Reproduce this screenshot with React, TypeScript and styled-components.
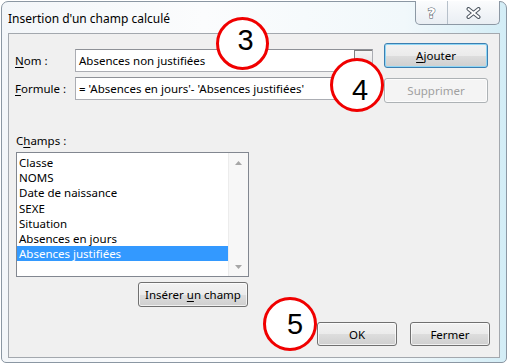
import styled, { createGlobalStyle } from 'styled-components';

const GlobalStyle = createGlobalStyle`
  html, body {
    margin: 0;
    padding: 0;
    background: #ffffff;
  }
  body {
    width: 508px;
    height: 364px;
    overflow: hidden;
    font-family: "Noto Sans", "Liberation Sans", sans-serif;
    font-size: 11.5px;
    color: #000;
  }
`;

const Window = styled.div`
  position: relative;
  box-sizing: border-box;
  width: 506px;
  height: 362px;
  margin: 1px;
  border: 1px solid #8b97a3;
  border-radius: 7px 7px 5px 5px;
  background: linear-gradient(to right, #f3f6f9 0%, #fbfcfd 40%, #f1f8fb 80%, #d3edf6 100%);
  display: flex;
  flex-direction: column;
  padding: 0 6px 4px 6px;
`;

const TitleBar = styled.div`
  height: 31px;
  display: flex;
  align-items: flex-start;
`;

const Title = styled.div`
  padding: 9px 0 0 0;
  line-height: 16px;
  font-size: 12px;
  color: #000;
`;

const CaptionGroup = styled.div`
  margin-left: auto;
  margin-top: -1px;
  height: 23px;
  display: flex;
  border: 1px solid #8c98a4;
  border-top: none;
  border-radius: 0 0 5px 5px;
  background: linear-gradient(#fbfcfd, #e9eef3);
  overflow: hidden;
`;

const CaptionButton = styled.div<{ $w: number }>`
  width: ${(p) => p.$w}px;
  display: flex;
  align-items: center;
  justify-content: center;
  & + & {
    border-left: 1px solid #b6c0ca;
  }
`;

const HelpGlyph = styled.span`
  font-family: "DejaVu Sans", sans-serif;
  font-weight: 700;
  font-size: 14px;
  line-height: 14px;
  color: #ffffff;
  -webkit-text-stroke: 1px #4d5660;
  paint-order: stroke fill;
`;

const Client = styled.div`
  flex: 1;
  display: flex;
  flex-direction: column;
  border: 1px solid #a3a8ae;
  background: #f0f0f0;
`;

const TopSection = styled.div`
  display: flex;
  padding: 9px 11px 0 6px;
  gap: 11px;
`;

const Fields = styled.div`
  display: flex;
  flex-direction: column;
  gap: 5px;
  padding-top: 6px;
`;

const FieldRow = styled.div`
  display: flex;
  align-items: center;
  height: 23px;
`;

const Label = styled.span`
  width: 60px;
`;

const Mn = styled.span`
  text-decoration: underline;
  text-underline-offset: 2px;
`;

const TextBox = styled.div`
  box-sizing: border-box;
  width: 298px;
  height: 23px;
  display: flex;
  align-items: center;
  border: 1px solid #abadb3;
  border-top-color: #8e9197;
  background: #fff;
`;

const TextValue = styled.span`
  flex: 1;
  padding-left: 3px;
  white-space: nowrap;
  overflow: hidden;
`;

const DropButton = styled.div`
  box-sizing: border-box;
  width: 18px;
  height: 100%;
  display: flex;
  align-items: flex-end;
  justify-content: center;
  padding-bottom: 6px;
  border: 1px solid #7f7f7f;
  border-right: none;
  background: linear-gradient(#f6f6f6, #e0e0e0);
`;

const SideButtons = styled.div`
  display: flex;
  flex-direction: column;
  gap: 10px;
`;

const Button = styled.button<{ $w: number; $h?: number; $default?: boolean }>`
  box-sizing: border-box;
  width: ${(p) => p.$w}px;
  height: ${(p) => p.$h ?? 25}px;
  padding: 0;
  font-family: "Noto Sans", "Liberation Sans", sans-serif;
  font-size: 11.5px;
  color: #000;
  border: 1px solid ${(p) => (p.$default ? '#3c7fb1' : '#707070')};
  border-radius: 3px;
  background: linear-gradient(#f2f2f2 0%, #ebebeb 50%, #dddddd 51%, #cfcfcf 100%);
  box-shadow: inset 0 0 0 1px ${(p) => (p.$default ? '#8fd6f5' : 'rgba(255,255,255,0.7)')};

  &:disabled {
    color: #a0a0a0;
    border-color: #adb2b5;
    background: #f4f4f4;
    box-shadow: inset 0 0 0 1px #fcfcfc;
  }
`;

const ChampsSection = styled.div`
  display: flex;
  flex-direction: column;
  width: 233px;
  margin: 30px 0 0 7px;
`;

const ChampsLabel = styled.div`
  line-height: 15px;
  margin-bottom: 4px;
`;

const ListBox = styled.div`
  box-sizing: border-box;
  height: 125px;
  display: flex;
  border: 1px solid #828790;
  background: #fff;
`;

const Items = styled.div`
  flex: 1;
  padding-top: 2px;
`;

const Item = styled.div<{ $selected?: boolean }>`
  height: 15.2px;
  line-height: 15.2px;
  padding-left: 2px;
  white-space: nowrap;
  background: ${(p) => (p.$selected ? '#3399ff' : 'transparent')};
  color: ${(p) => (p.$selected ? '#fff' : '#000')};
`;

const ScrollBar = styled.div`
  width: 19px;
  display: flex;
  flex-direction: column;
  justify-content: space-between;
  background: #f7f7f7;
  border-left: 1px solid #ececec;
`;

const ScrollArrow = styled.div`
  height: 19px;
  display: flex;
  align-items: center;
  justify-content: center;
`;

const InsertRow = styled.div`
  display: flex;
  justify-content: flex-end;
  margin: 5px 1px 0 0;
`;

const Footer = styled.div`
  display: flex;
  justify-content: flex-end;
  gap: 13px;
  margin-top: 15px;
  padding-right: 9px;
`;

const Callout = styled.div<{ $x: number; $y: number; $d: number; $dx: number; $dy: number }>`
  position: absolute;
  left: ${(p) => p.$x}px;
  top: ${(p) => p.$y}px;
  width: ${(p) => p.$d}px;
  height: ${(p) => p.$d}px;
  box-sizing: border-box;
  border: 3.5px solid #f00000;
  border-radius: 50%;
  background: #ffffff;
  display: flex;
  align-items: center;
  justify-content: center;
  font-family: "Liberation Sans", Arial, sans-serif;
  font-size: 29px;
  line-height: 1;
  color: #000;

  span {
    transform: translate(${(p) => p.$dx}px, ${(p) => p.$dy}px);
  }
`;

const fields = [
  'Classe',
  'NOMS',
  'Date de naissance',
  'SEXE',
  'Situation',
  'Absences en jours',
  'Absences justifiées',
];

const Triangle = ({ up, color }: { up?: boolean; color: string }) => (
  <svg width="7" height="4" viewBox="0 0 7 4">
    <path d={up ? 'M0 4 L3.5 0 L7 4 Z' : 'M0 0 L7 0 L3.5 4 Z'} fill={color} />
  </svg>
);

const App = () => {
  return (
    <>
      <GlobalStyle />
      <Window>
        <TitleBar>
          <Title>Insertion d'un champ calculé</Title>
          <CaptionGroup>
            <CaptionButton $w={31}>
              <HelpGlyph>?</HelpGlyph>
            </CaptionButton>
            <CaptionButton $w={51}>
              <svg width="15" height="12" viewBox="0 0 15 12">
                <path d="M2.5 2 L12.5 10 M12.5 2 L2.5 10" stroke="#4d5660" strokeWidth="4" strokeLinecap="round" />
                <path d="M2.5 2 L12.5 10 M12.5 2 L2.5 10" stroke="#ffffff" strokeWidth="2" strokeLinecap="round" />
              </svg>
            </CaptionButton>
          </CaptionGroup>
        </TitleBar>

        <Client>
          <TopSection>
            <Fields>
              <FieldRow>
                <Label>
                  <Mn>N</Mn>om :
                </Label>
                <TextBox>
                  <TextValue>Absences non justifiées</TextValue>
                  <DropButton>
                    <Triangle color="#000" />
                  </DropButton>
                </TextBox>
              </FieldRow>
              <FieldRow>
                <Label>
                  <Mn>F</Mn>ormule :
                </Label>
                <TextBox>
                  <TextValue>= 'Absences en jours'- 'Absences justifiées'</TextValue>
                </TextBox>
              </FieldRow>
            </Fields>
            <SideButtons>
              <Button $w={104} $default>
                <Mn>A</Mn>jouter
              </Button>
              <Button $w={104} disabled>
                Supprimer
              </Button>
            </SideButtons>
          </TopSection>

          <ChampsSection>
            <ChampsLabel>
              C<Mn>h</Mn>amps :
            </ChampsLabel>
            <ListBox>
              <Items>
                {fields.map((f, i) => (
                  <Item key={f} $selected={i === fields.length - 1}>
                    {f}
                  </Item>
                ))}
              </Items>
              <ScrollBar>
                <ScrollArrow>
                  <Triangle up color="#a6a6a6" />
                </ScrollArrow>
                <ScrollArrow>
                  <Triangle color="#a6a6a6" />
                </ScrollArrow>
              </ScrollBar>
            </ListBox>
            <InsertRow>
              <Button $w={110}>
                Insérer <Mn>u</Mn>n champ
              </Button>
            </InsertRow>
          </ChampsSection>

          <Footer>
            <Button $w={80} $h={24}>OK</Button>
            <Button $w={80} $h={24}>Fermer</Button>
          </Footer>
        </Client>

        <Callout $x={214} $y={15} $d={53} $dx={3} $dy={-3}>
          <span>3</span>
        </Callout>
        <Callout $x={328} $y={56} $d={54} $dx={3} $dy={5}>
          <span>4</span>
        </Callout>
        <Callout $x={261} $y={295} $d={54} $dx={5} $dy={0}>
          <span>5</span>
        </Callout>
      </Window>
    </>
  );
};

export default App;
